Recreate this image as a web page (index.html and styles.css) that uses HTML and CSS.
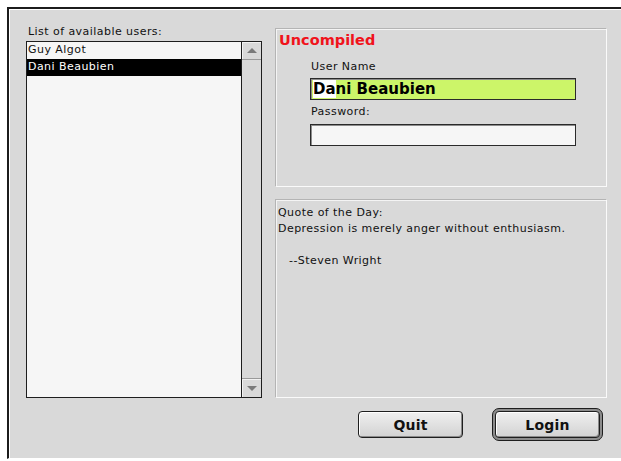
FILE: index.html
```html
<!DOCTYPE html>
<html>
<head>
<meta charset="utf-8">
<title>Login</title>
<link rel="stylesheet" href="styles.css">
</head>
<body>
<div class="window">
  <div class="left-col">
    <div class="caption">List of available users:</div>
    <div class="listbox">
      <ul class="list">
        <li class="item">Guy Algot</li>
        <li class="item selected">Dani Beaubien</li>
      </ul>
      <div class="scrollbar">
        <div class="arrow up"><span class="tri tri-up"></span></div>
        <div class="track"></div>
        <div class="arrow down"><span class="tri tri-down"></span></div>
      </div>
    </div>
  </div>
  <div class="right-col">
    <div class="panel login-panel">
      <div class="status">Uncompiled</div>
      <div class="form">
        <div class="field-label">User Name</div>
        <div class="field name-field"><span class="sel">Da</span>ni Beaubien</div>
        <div class="field-label pw-label">Password:</div>
        <div class="field pw-field"></div>
      </div>
    </div>
    <div class="panel quote-panel">
      <div class="qline">Quote of the Day:</div>
      <div class="qline">Depression is merely anger without enthusiasm.</div>
      <div class="qline">&nbsp;</div>
      <div class="qline author">--Steven Wright</div>
    </div>
    <div class="buttons">
      <button class="btn">Quit</button>
      <div class="default-ring"><button class="btn">Login</button></div>
    </div>
  </div>
</div>
</body>
</html>
```

FILE: styles.css
```css
html, body {
  margin: 0;
  padding: 0;
  background: #ffffff;
  overflow: hidden;
}

body {
  width: 621px;
  height: 461px;
  font-family: "DejaVu Sans", "Liberation Sans", sans-serif;
  font-size: 11px;
  letter-spacing: 0.45px;
  color: #111;
}

.window {
  box-sizing: border-box;
  margin: 7px 0 0 7px;
  width: 640px;
  height: 452px;
  border-top: 2px solid #1c1c1c;
  border-left: 2px solid #1c1c1c;
  border-bottom: 1px solid #ffffff;
  background: #d9d9d9;
  box-shadow: inset 1px 1px 0 #ffffff;
  display: flex;
  align-items: flex-start;
  gap: 13px;
  padding: 16px 0 0 17px;
}

/* ---- user list ---- */
.left-col {
  width: 236px;
  display: flex;
  flex-direction: column;
}

.caption {
  line-height: 14px;
  padding-left: 2px;
  margin-bottom: 2px;
}

.listbox {
  box-sizing: border-box;
  height: 357px;
  border: 1px solid #1e1e1e;
  background: #f6f6f6;
  display: flex;
}

.list {
  list-style: none;
  margin: 0;
  padding: 0;
  flex: 1;
}

.item {
  height: 17px;
  line-height: 16px;
  padding-left: 1px;
}

.item.selected {
  background: #000;
  color: #fff;
}

.scrollbar {
  width: 19px;
  border-left: 1px solid #1e1e1e;
  background: #d9d9d9;
  display: flex;
  flex-direction: column;
}

.arrow {
  height: 17px;
  display: flex;
  align-items: center;
  justify-content: center;
  box-shadow: inset 1px 1px 0 #f2f2f2;
}

.arrow.up {
  border-bottom: 1px solid #9a9a9a;
}

.arrow.down {
  border-top: 1px solid #9a9a9a;
  height: 18px;
}

.track {
  flex: 1;
}

.tri {
  width: 0;
  height: 0;
  border-left: 5px solid transparent;
  border-right: 5px solid transparent;
}

.tri-up {
  border-bottom: 5px solid #7a7a7a;
}

.tri-down {
  border-top: 5px solid #7a7a7a;
}

/* ---- right side ---- */
.right-col {
  width: 332px;
  padding-top: 3px;
  display: flex;
  flex-direction: column;
}

.panel {
  box-sizing: border-box;
  border-top: 1px solid #b4b4b4;
  border-left: 1px solid #b4b4b4;
  border-right: 1px solid #fafafa;
  border-bottom: 1px solid #fafafa;
  box-shadow: inset 1px 1px 0 #f4f4f4;
}

.login-panel {
  height: 159px;
  padding: 2px 3px;
}

.status {
  color: #f0131b;
  font-weight: bold;
  font-size: 14.5px;
  letter-spacing: 0;
  line-height: 19px;
}

.form {
  margin: 9px 0 0 31px;
  width: 266px;
}

.field-label {
  line-height: 16px;
  padding-left: 1px;
  margin-bottom: 3px;
}

.pw-label {
  margin-top: 4px;
  margin-bottom: 4px;
}

.field {
  box-sizing: border-box;
  height: 22px;
  border: 1px solid #2a2a2a;
  box-shadow: inset 1px 1px 0 #8c8c8c;
}

.name-field {
  background: #ccf569;
  font-weight: bold;
  font-size: 15px;
  letter-spacing: 0;
  line-height: 20px;
  padding-left: 2px;
  color: #000;
}

.name-field .sel {
  background: #ffffff;
}

.pw-field {
  background: #f6f6f6;
}

.quote-panel {
  margin-top: 12px;
  height: 199px;
  padding: 5px 2px;
}

.qline {
  line-height: 16px;
}

.qline.author {
  padding-left: 11px;
}

/* ---- buttons ---- */
.buttons {
  margin-top: 10px;
  padding-right: 4px;
  display: flex;
  justify-content: flex-end;
  align-items: center;
  gap: 29px;
}

.btn {
  box-sizing: border-box;
  width: 105px;
  height: 27px;
  border: 1px solid #1e1e1e;
  border-radius: 4px;
  background: linear-gradient(#f0f0f0, #d2d2d2);
  box-shadow: inset 1px 1px 0 #ffffff, inset -1px -1px 0 #8a8a8a;
  font-family: "DejaVu Sans", "Liberation Sans", sans-serif;
  font-weight: bold;
  font-size: 14px;
  letter-spacing: 0.2px;
  color: #111;
  padding: 0;
}

.default-ring {
  border: 1px solid #1e1e1e;
  border-radius: 7px;
  background: #8c8c8c;
  padding: 2px;
  display: flex;
}
```
